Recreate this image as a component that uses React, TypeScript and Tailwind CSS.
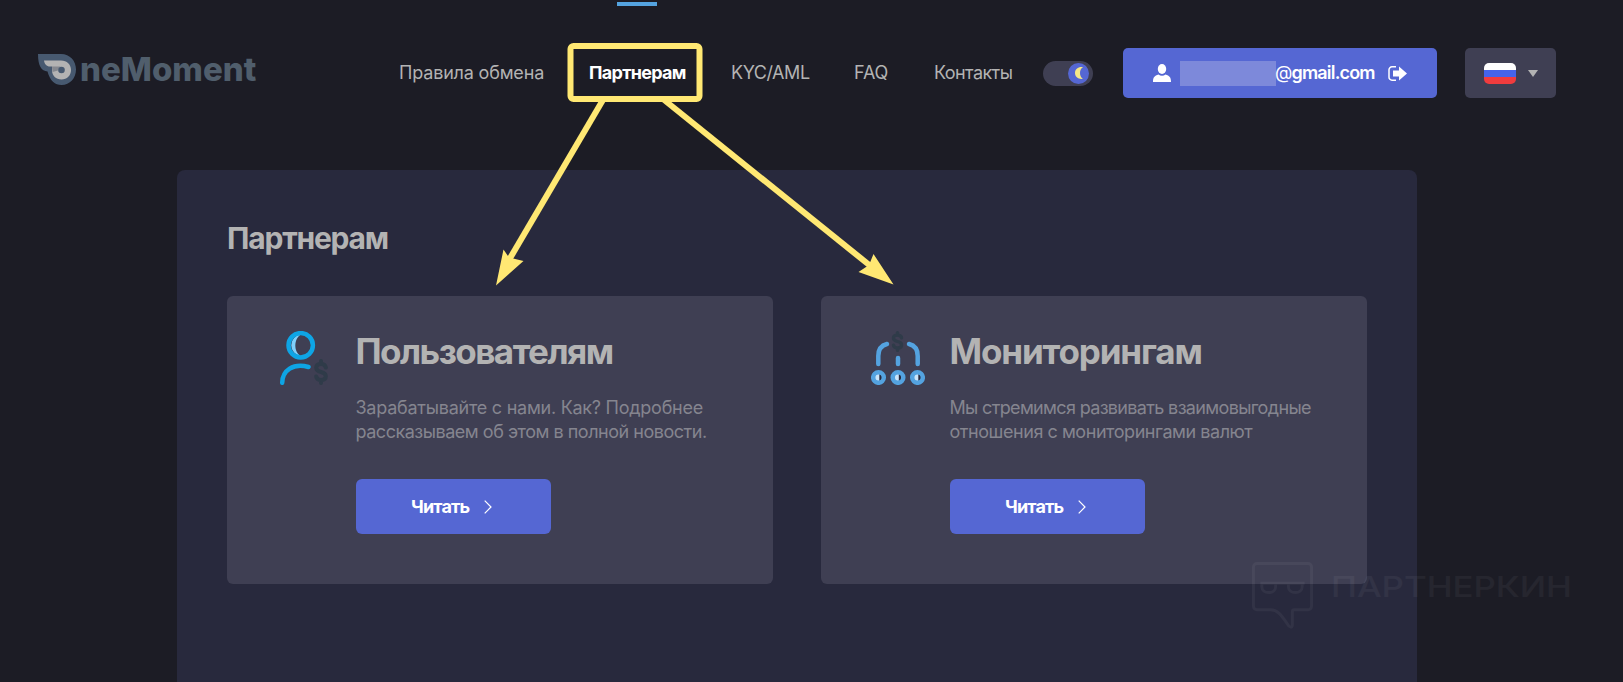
import type { ReactNode } from 'react'

const NAV = [
  { label: 'Правила обмена', className: 'w-[145px] tracking-[-0.18px]' },
  { label: 'Партнерам', className: 'w-[97px] font-bold text-white tracking-[-0.7px]' },
  { label: 'KYC/AML', className: 'w-[78px] tracking-[-0.45px]' },
  { label: 'FAQ', className: 'w-[35px] tracking-[-0.1px]' },
  { label: 'Контакты', className: 'w-[79px] tracking-[-0.58px]' },
]

function Logo() {
  return (
    <a className="flex h-8 w-[218px] items-center gap-1">
      <svg className="h-8 w-[38px] shrink-0" viewBox="0 0 38 32">
        <path d="M0 0H23C32 0 38 7 38 15.500S32 31 23.500 31C17 31 12 27 9.500 17.500C3.500 17 0 12 0 0Z" fill="#475970" />
        <path d="M6 6.500H23C29 6.500 33 10.500 33 16S29 25.500 23.500 25.500S14 21.500 14 16.500V12.500H12C8.500 12.500 6.500 10 6 6.500Z" fill="#b3b3b3" />
        <path d="M14 12.500H23C21 13 20.500 14 20 16.500L14.500 18Z" fill="#85888f" />
        <circle cx="23.500" cy="16" r="3.300" fill="#475970" />
      </svg>
      <span className="-mt-[3px] text-[33px] leading-8 font-extrabold whitespace-nowrap text-[#505e6c]">
        neMoment
      </span>
    </a>
  )
}

/* Переключатель темы */
function ThemeToggle() {
  return (
    <div className="flex h-[25px] w-[50px] items-center justify-end rounded-full bg-[#3f3f53] pr-1">
      <span className="flex size-[21px] items-center justify-center rounded-full bg-[#5567d3]">
        <svg className="h-3 w-2" viewBox="0 0 8 12">
          <path d="M8 .2C3.500 -.5 0 2 0 6s3.500 6.500 8 5.800C5.800 10.500 5 8.500 5 6S5.800 1.500 8 .2Z" fill="#f5e887" />
        </svg>
      </span>
    </div>
  )
}

function AccountButton() {
  return (
    <button className="flex h-[50px] w-[314px] items-center rounded-[5px] bg-[#5567d3] pl-[30px] text-white">
      <svg className="h-[18px] w-[18px]" viewBox="0 0 18 18" fill="#fff">
        <ellipse cx="9" cy="5" rx="4.200" ry="5" />
        <path d="M0 18C0 13 1.500 12 5.500 10.500C7.500 12.200 10.500 12.200 12.500 10.500C16.500 12 18 13 18 18Z" />
      </svg>
      <span className="ml-[9px] h-[25px] w-24 bg-[#7d89da]" />
      <span className="w-[101px] text-left text-lg font-semibold tracking-[-0.83px] whitespace-nowrap">
        <span className="-ml-px font-normal">@</span>gmail.com
      </span>
      <svg className="ml-[11px] h-[15px] w-[19px]" viewBox="0 0 19 15">
        <path d="M8 .8H4A3 3 0 0 0 1 3.800V11.200A3 3 0 0 0 4 14.200H8" fill="none" stroke="#fff" strokeWidth="1.500" />
        <path d="M5 4.500H11V.5L19 7.500L11 14.500V10.500H5Z" fill="#fff" />
      </svg>
    </button>
  )
}

function LanguageButton() {
  return (
    <button className="ml-7 flex h-[50px] w-[91px] items-center rounded-[5px] bg-[#3f3f53] pt-px pl-[19px]">
      <span className="flex h-[21px] w-8 flex-col overflow-hidden rounded-[5px]">
        <span className="flex-1 bg-white" />
        <span className="flex-1 bg-[#4464ea]" />
        <span className="flex-1 bg-[#f03c3e]" />
      </span>
      <svg className="ml-3 h-[7px] w-[10px]" viewBox="0 0 10 7">
        <path d="M0 0H10L5 7Z" fill="#b3b3b3" />
      </svg>
    </button>
  )
}

/* Знак валюты внутри иконок */
function CurrencyMark({ x, y, width, height }: { x: number; y: number; width: number; height: number }) {
  return (
    <svg x={x} y={y} width={width} height={height} viewBox="0 0 14 26" preserveAspectRatio="none" fill="none">
      <path
        d="M11.800 8.500C11.300 6 9.500 5 7 5C4 5 2.200 6.500 2.200 8.800C2.200 11.500 4.500 12.400 7 13S11.800 14.500 11.800 17.200S9.800 21 7 21C4.500 21 2.700 20 2.200 17.500M7 2V4.500M7 21.500V24"
        stroke="#2f3b49"
        strokeWidth="4"
        strokeLinecap="round"
      />
    </svg>
  )
}

function UserIcon() {
  return (
    <svg className="size-[54px]" viewBox="0 0 54 54" fill="none">
      <path d="M24 3.500A10.800 10.800 0 0 0 24 25C16.500 21.500 16.500 7.500 24 3.500Z" fill="#7fd0fb" />
      <circle cx="23.700" cy="14.300" r="12.200" stroke="#0ea5e5" strokeWidth="4.500" />
      <path d="M5.200 51.800C5.500 39.500 16 31.800 31.500 36" stroke="#0ea5e5" strokeWidth="4.500" strokeLinecap="round" />
      <CurrencyMark x={37} y={28} width={14} height={26} />
    </svg>
  )
}

function MonitoringIcon() {
  return (
    <svg className="size-[54px]" viewBox="0 0 54 54" fill="none">
      <CurrencyMark x={20.5} y={0} width={12} height={21} />
      <g stroke="#54a3e0" strokeWidth="4.500" strokeLinecap="round">
        <path d="M7.300 33V25C7.300 18 10 14.500 16 13" />
        <path d="M46.700 33V25C46.700 18 44 14.500 38 13" />
        <path d="M27 27V33" />
      </g>
      {[7.5, 27, 46.5].map((cx) => (
        <g key={cx}>
          <circle cx={cx} cy="46.500" r="4" fill="#28293d" />
          <path d={`M${cx + 0.8} 42.500H${cx - 1}A4 4 0 0 0 ${cx - 1} 50.500H${cx + 0.8}Z`} fill="#cbe5fa" />
          <circle cx={cx} cy="46.500" r="5.300" stroke="#54a3e0" strokeWidth="4.500" />
        </g>
      ))}
    </svg>
  )
}

/* Карточка раздела: иконка слева, текст и кнопка справа */
function PartnerCard({
  icon,
  title,
  children,
}: {
  icon: ReactNode
  title: ReactNode
  children: ReactNode
}) {
  return (
    <article className="flex h-72 w-[546px] rounded-[6px] bg-[#3f3f53] pt-[35px] pl-[50px]">
      <div className="w-[78.500px] shrink-0">{icon}</div>
      <div>
        <h2 className="mt-0.5 text-[35px] leading-[36px] font-bold text-[#b3b3b3]">{title}</h2>
        <div className="mt-[27px] text-lg leading-6 whitespace-nowrap text-[#85858f]">{children}</div>
        <button className="mt-[35px] ml-[0.5px] flex h-[55px] w-[195px] items-center justify-center gap-4 rounded-[6px] bg-[#5567d3] pr-[4px] text-lg font-bold text-white">
          <span className="w-[57px] tracking-[-0.83px]">Читать</span>
          <svg className="h-[14px] w-2" viewBox="0 0 8 14">
            <path d="M.7 .7L7 7L.7 13.300" fill="none" stroke="#fff" strokeWidth="1.200" />
          </svg>
        </button>
      </div>
    </article>
  )
}

function Arrows() {
  return (
    <svg className="pointer-events-none absolute top-0 left-0 h-[682px] w-[1623px]" viewBox="0 0 1623 682">
      <g fill="none" stroke="#ffe873" strokeWidth="6">
        <rect x="570.500" y="46" width="129" height="53" rx="3" />
        <path d="M603.500 99L509 260" />
        <path d="M663 99L873 268" />
      </g>
      <g fill="#ffe873">
        <path d="M496 285.500L503.500 249.500L509 257.500L523.500 261Z" />
        <path d="M893.500 284.500L873.500 254L869 265L858.500 272Z" />
      </g>
    </svg>
  )
}

function Watermark() {
  return (
    <div className="pointer-events-none absolute top-[562px] left-[1252px] flex text-white opacity-[0.045]">
      <svg className="h-[67px] w-[61px]" viewBox="0 0 62 68" fill="none" stroke="currentColor" strokeWidth="3">
        <path d="M5 1.500H57A3.500 3.500 0 0 1 60.500 5V45A3.500 3.500 0 0 1 57 48.500H43A2 2 0 0 0 41 50.500V64C41 67 38 67 36 63C31 56 27 48.500 19 48.500H5A3.500 3.500 0 0 1 1.500 45V5A3.500 3.500 0 0 1 5 1.500Z" />
        <path d="M8.500 21.500H53.500M10 22V25C10 33 24 33 24 25V22M37 22V25C37 33 51 33 51 25V22" />
      </svg>
      <span className="mt-[10px] ml-[18px] origin-left scale-x-120 text-[29px] leading-[29px] font-medium">
        ПАРТНЕРКИН
      </span>
    </div>
  )
}

export default function App() {
  return (
    <div className="relative h-[682px] w-[1623px] overflow-hidden bg-[#1c1c25] font-['Inter',sans-serif] text-[#b3b3b3]">
      <div className="pt-0.5 pl-[617px]">
        <div className="h-1 w-10 bg-[#54a3e0]" />
      </div>
      <header className="mt-[42px] flex h-[50px] items-center pl-[38px]">
        <div className="-mt-1.5">
          <Logo />
        </div>
        <nav className="ml-[143px] flex w-[616px] gap-[45px] text-lg">
          {NAV.map((item) => (
            <a key={item.label} className={`shrink-0 whitespace-nowrap ${item.className}`}>
              {item.label}
            </a>
          ))}
        </nav>
        <div className="mr-[30px] ml-7">
          <ThemeToggle />
        </div>
        <AccountButton />
        <LanguageButton />
      </header>
      <main className="mt-[72px] ml-[177px] h-[512px] w-[1240px] rounded-t-lg bg-[#28293d] px-[50px] pt-[50px]">
        <h1 className="text-[30px] leading-9 font-bold tracking-[-1.2px]">Партнерам</h1>
        <div className="mt-10 flex gap-12">
          <PartnerCard icon={<UserIcon />} title={<span className="tracking-[-1.55px]">Пользователям</span>}>
            <p className="tracking-[-0.25px]">Зарабатывайте с нами. Как? Подробнее</p>
            <p className="tracking-[-0.48px]">рассказываем об этом в полной новости.</p>
          </PartnerCard>
          <PartnerCard icon={<MonitoringIcon />} title={<span className="tracking-[-1.14px]">Мониторингам</span>}>
            <p className="tracking-[-0.66px]">Мы стремимся развивать взаимовыгодные</p>
            <p className="tracking-[-0.45px]">отношения с мониторингами валют</p>
          </PartnerCard>
        </div>
      </main>
      <Arrows />
      <Watermark />
    </div>
  )
}
